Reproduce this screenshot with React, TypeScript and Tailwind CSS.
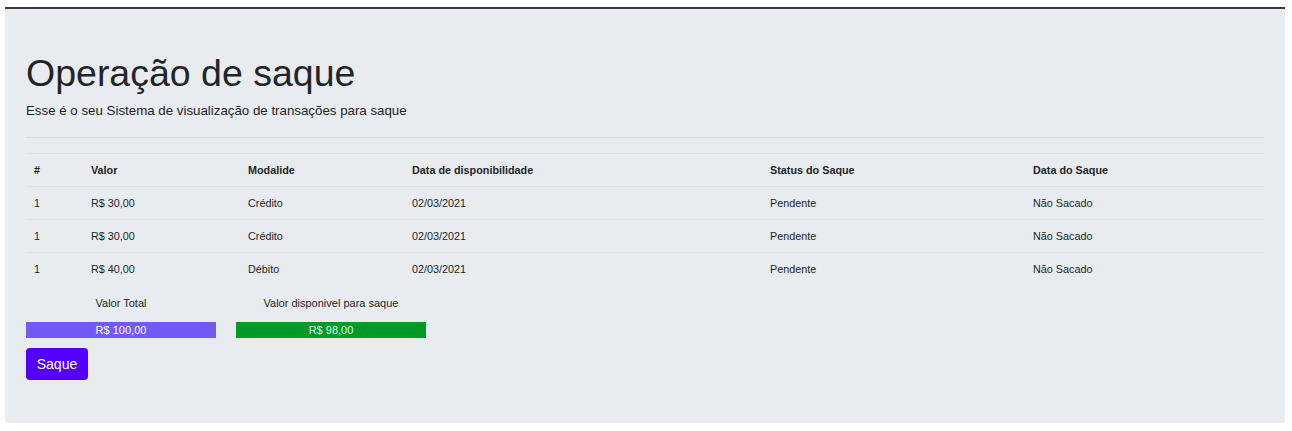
const rows = [
  { id: 1, valor: 'R$ 30,00', modalidade: 'Crédito', data: '02/03/2021', status: 'Pendente', saque: 'Não Sacado' },
  { id: 1, valor: 'R$ 30,00', modalidade: 'Crédito', data: '02/03/2021', status: 'Pendente', saque: 'Não Sacado' },
  { id: 1, valor: 'R$ 40,00', modalidade: 'Débito', data: '02/03/2021', status: 'Pendente', saque: 'Não Sacado' },
]

const cols = 'grid grid-cols-[57px_157px_164px_358px_263px_1fr]'

function Summary({ label, value, bar, text }: { label: string; value: string; bar: string; text: string }) {
  return (
    <div className="flex w-[190px] flex-col">
      <div className="h-[37px] pt-[10px] text-center text-[11px] leading-[16px] text-[#212529]">{label}</div>
      <div className={`h-[16px] text-center text-[11px] leading-[16px] ${bar} ${text}`}>{value}</div>
    </div>
  )
}

export default function App() {
  return (
    <div className="min-h-[431px] bg-white pl-[5px] pr-[7px] pt-[7px] font-['Liberation_Sans',Arial,sans-serif] text-[#212529]">
      <div className="rounded-b-[4px] border-t-2 border-[#343a40] bg-[#e9ecef] px-[21px] pb-[43px] pt-[41px]">
        <h1 className="text-[37.5px] font-normal leading-[46px]">Operação de saque</h1>
        <p className="mt-[6px] text-[13.3px] leading-[18px]">Esse é o seu Sistema de visualização de transações para saque</p>
        <hr className="mt-[17px] mb-[15px] border-t border-[#dadde1]" />

        <div className="text-[10.8px] leading-[16px]">
          <div className={`${cols} h-[33px] items-center border-t border-[#dee2e6] font-bold`}>
            <div className="px-2">#</div>
            <div className="px-2">Valor</div>
            <div className="px-2">Modalide</div>
            <div className="px-2">Data de disponibilidade</div>
            <div className="px-2">Status do Saque</div>
            <div className="px-2">Data do Saque</div>
          </div>
          {rows.map((r, i) => (
            <div key={i} className={`${cols} h-[33px] items-center border-t border-[#dee2e6]`}>
              <div className="px-2">{r.id}</div>
              <div className="px-2">{r.valor}</div>
              <div className="px-2">{r.modalidade}</div>
              <div className="px-2">{r.data}</div>
              <div className="px-2">{r.status}</div>
              <div className="px-2">{r.saque}</div>
            </div>
          ))}
        </div>

        <div className="flex gap-[20px]">
          <Summary label="Valor Total" value="R$ 100,00" bar="bg-[#735af5]" text="text-white" />
          <Summary label="Valor disponivel para saque" value="R$ 98,00" bar="bg-[#009b25]" text="text-[#d9ffe4]" />
        </div>

        <button type="button" className="mt-[10px] h-[32px] w-[62px] rounded-[4px] bg-[#5300ff] text-[14px] text-white">
          Saque
        </button>
      </div>
    </div>
  )
}
